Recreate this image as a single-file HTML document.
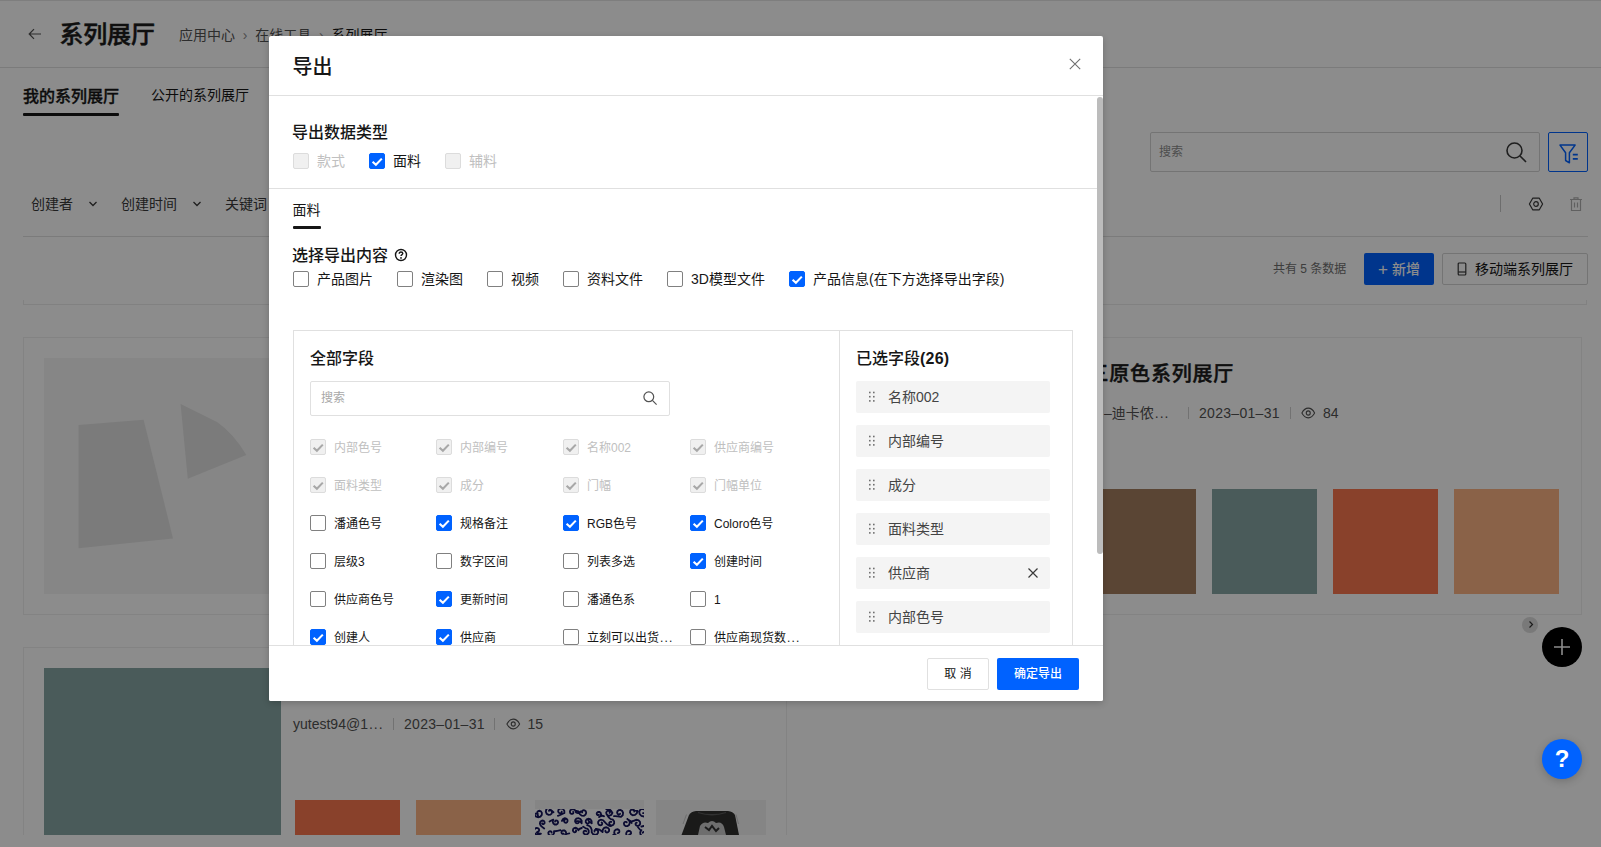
<!DOCTYPE html>
<html lang="zh-CN">
<head>
<meta charset="utf-8">
<title>系列展厅</title>
<style>
*{box-sizing:border-box;margin:0;padding:0}
html,body{width:1601px;height:847px;overflow:hidden;background:#fff}
body{font-family:"Liberation Sans","Noto Sans CJK SC",sans-serif;color:#161616;font-size:14px;position:relative}
.abs{position:absolute;white-space:nowrap}
.t{position:absolute;white-space:nowrap;line-height:20px;height:20px}
.hl{position:absolute;height:1px;background:#e0e0e0}
.vl{position:absolute;width:1px;background:#e0e0e0}
/* ---------- page ---------- */
#page{position:absolute;left:0;top:0;width:1601px;height:847px;background:#fff;overflow:hidden}
.card{position:absolute;border:1px solid #efefef;background:#fff}
.sw{position:absolute}
/* ---------- overlay / modal ---------- */
#mask{position:absolute;left:0;top:0;width:1601px;height:847px;background:rgba(0,0,0,.45)}
#modal{position:absolute;left:269px;top:36px;width:834px;height:665px;background:#fff;box-shadow:0 2px 7px rgba(0,0,0,.2);border-radius:2px;overflow:hidden}
.cb{position:absolute;width:16px;height:16px;border:1px solid #808080;border-radius:2px;background:#fff}
.cb.on{background:#0062ff;border-color:#0062ff}
.cb.dis{background:#f0f0f0;border-color:#dcdcdc}
.cb svg{position:absolute;left:-1px;top:-1px;width:16px;height:16px}
.l14{position:absolute;white-space:nowrap;font-size:14px;line-height:20px;color:#161616}
.l12{position:absolute;white-space:nowrap;font-size:12px;line-height:18px;color:#161616}
.gray{color:#c0c0c0}
.h16{position:absolute;white-space:nowrap;font-size:16px;line-height:22px;font-weight:500;color:#161616}
.item{position:absolute;left:587px;width:194px;height:32px;background:#f4f4f4;border-radius:2px}
.item span{position:absolute;left:32px;top:6px;font-size:14px;line-height:20px;color:#444;white-space:nowrap}
.item svg{position:absolute;left:11.500px;top:10px}
</style>
</head>
<body>
<div id="page">
  <!-- top header -->
  <div class="hl" style="left:0;top:0;width:1601px;background:#e6e6e6"></div>
  <div class="hl" style="left:0;top:67px;width:1601px"></div>
  <svg class="abs" style="left:27px;top:27px" width="16" height="14" viewBox="0 0 16 14"><path d="M14 7H2.500M7 2.200L2.200 7L7 11.800" fill="none" stroke="#525252" stroke-width="1.200"/></svg>
  <div class="abs" style="left:59.500px;top:16.500px;font-size:24px;line-height:36px;font-weight:500;-webkit-text-stroke:0.500px #1c1c1c;letter-spacing:-0.200px;color:#1c1c1c">系列展厅</div>
  <div class="abs" style="left:179px;top:25px;font-size:14px;line-height:20px;color:#525252">应用中心&nbsp; <span style="color:#8d8d8d">›</span>&nbsp; 在线工具&nbsp; <span style="color:#8d8d8d">›</span>&nbsp; <span style="color:#161616">系列展厅</span></div>
  <!-- tabs -->
  <div class="abs" style="left:23px;top:86px;font-size:16px;line-height:22px;font-weight:500;-webkit-text-stroke:0.350px #161616;color:#161616">我的系列展厅</div>
  <div class="abs" style="left:23px;top:113px;width:96px;height:3px;background:#161616;border-radius:1px"></div>
  <div class="abs" style="left:151px;top:85px;font-size:14px;line-height:20px;color:#161616">公开的系列展厅</div>
  <!-- search -->
  <div class="abs" style="left:1150px;top:132px;width:390px;height:40px;border:1px solid #d4d4d4;border-radius:2px"></div>
  <div class="abs" style="left:1159px;top:142px;font-size:12px;line-height:20px;color:#8d8d8d">搜索</div>
  <svg class="abs" style="left:1504px;top:140px" width="24" height="24" viewBox="0 0 24 24"><circle cx="10.5" cy="10.5" r="7.5" fill="none" stroke="#393939" stroke-width="1.6"/><path d="M16 16l6 6" stroke="#393939" stroke-width="1.6"/></svg>
  <div class="abs" style="left:1548px;top:132px;width:40px;height:40px;border:1.500px solid #0062ff;border-radius:2px;background:#fff"></div>
  <svg class="abs" style="left:1557px;top:142px" width="22" height="22" viewBox="0 0 22 22"><path d="M3 3.100H18.100L12.400 10.800V20.800L8.600 18.500V10.800z" fill="none" stroke="#0062ff" stroke-width="1.500" stroke-linejoin="round"/><path d="M15.800 12.700h5M15.800 16.900h5" stroke="#0062ff" stroke-width="1.700"/></svg>
  <!-- filter row -->
  <div class="abs" style="left:31px;top:194px;font-size:14px;line-height:20px;color:#393939">创建者</div>
  <svg class="abs" style="left:88px;top:200px" width="10" height="8" viewBox="0 0 10 8"><path d="M1.5 2L5 5.5L8.5 2" fill="none" stroke="#393939" stroke-width="1.3"/></svg>
  <div class="abs" style="left:121px;top:194px;font-size:14px;line-height:20px;color:#393939">创建时间</div>
  <svg class="abs" style="left:192px;top:200px" width="10" height="8" viewBox="0 0 10 8"><path d="M1.5 2L5 5.5L8.5 2" fill="none" stroke="#393939" stroke-width="1.3"/></svg>
  <div class="abs" style="left:225px;top:194px;font-size:14px;line-height:20px;color:#393939">关键词</div>
  <div class="vl" style="left:1500px;top:195px;height:17px;background:#c6c6c6"></div>
  <svg class="abs" style="left:1528px;top:196px" width="16" height="16" viewBox="0 0 16 16"><path d="M4.7 2.2h6.6L14.6 8l-3.3 5.8H4.700L1.400 8z" fill="none" stroke="#393939" stroke-width="1.2" stroke-linejoin="round"/><circle cx="8" cy="8" r="2.3" fill="none" stroke="#393939" stroke-width="1.2"/></svg>
  <svg class="abs" style="left:1569px;top:196px" width="14" height="16" viewBox="0 0 14 16"><path d="M1 3.500h12M5 3.500V1.800h4v1.700M2.500 3.500v11h9v-11M5.500 6.500v5M8.500 6.500v5" fill="none" stroke="#b0b0b0" stroke-width="1.2"/></svg>
  <div class="hl" style="left:23px;top:236px;width:1565px"></div>
  <!-- count row -->
  <div class="abs" style="left:1273px;top:259px;font-size:12px;line-height:20px;color:#6f6f6f">共有 5 条数据</div>
  <div class="abs" style="left:1364px;top:253px;width:70px;height:32px;background:#0062ff;border-radius:2px;color:#fff;font-size:14px;line-height:32px;text-align:center;font-weight:500"><span style="font-size:17px;font-weight:400;position:relative;top:0.500px">+</span> 新增</div>
  <div class="abs" style="left:1442px;top:253px;width:146px;height:32px;border:1px solid #d4d4d4;border-radius:2px"></div>
  <svg class="abs" style="left:1457px;top:262px" width="10" height="14" viewBox="0 0 10 14"><rect x="1.2" y="1" width="7.600" height="12" rx="1" fill="none" stroke="#393939" stroke-width="1.2"/><path d="M1.2 10h7.600" stroke="#393939" stroke-width="1.200"/></svg>
  <div class="abs" style="left:1475px;top:259px;font-size:14px;line-height:20px;color:#161616">移动端系列展厅</div>
  <div class="hl" style="left:23px;top:304px;width:1564px;background:#ececec"></div><div class="vl" style="left:23px;top:300px;height:4px;background:#ececec"></div><div class="vl" style="left:1586px;top:300px;height:4px;background:#ececec"></div>

  <!-- card 1 -->
  <div class="card" style="left:23px;top:337px;width:764px;height:278px"></div>
  <div class="sw" style="left:44px;top:358px;width:237px;height:236px;background:#f4f4f4"></div>
  <svg class="abs" style="left:44px;top:358px" width="237" height="236" viewBox="0 0 237 236"><path d="M34.600 67L99.600 61.700L129 180.400L34.600 190.200z" fill="#e0e0e0"/><path d="M136.600 45.900L173 64Q189 75 202.300 96.900L143.800 120.700z" fill="#e0e0e0"/></svg>

  <!-- card 2 (right) -->
  <div class="card" style="left:815px;top:337px;width:767px;height:278px"></div>
  <div class="abs" style="left:1088.500px;top:359px;font-size:20px;line-height:30px;font-weight:500;-webkit-text-stroke:0.450px #1c1c1c;letter-spacing:0.800px;color:#1c1c1c">三原色系列展厅</div>
  <div class="abs" style="left:1104px;top:403px;font-size:14px;line-height:20px;color:#525252">–迪卡侬<span style="letter-spacing:1px;margin-left:1px">...</span></div>
  <div class="vl" style="left:1188px;top:407px;height:12px;background:#d0d0d0"></div>
  <div class="abs" style="left:1199px;top:403px;font-size:14px;line-height:20px;color:#525252;letter-spacing:0.300px">2023–01–31</div>
  <div class="vl" style="left:1290px;top:407px;height:12px;background:#d0d0d0"></div>
  <svg class="abs" style="left:1301px;top:407px" width="14.500" height="12" viewBox="0 0 16 12" preserveAspectRatio="none"><path d="M1 6C3 2.500 5.500 1.200 8 1.200S13 2.500 15 6C13 9.500 10.500 10.800 8 10.800S3 9.500 1 6z" fill="none" stroke="#525252" stroke-width="1.200"/><circle cx="8" cy="6" r="2.200" fill="none" stroke="#525252" stroke-width="1.200"/></svg>
  <div class="abs" style="left:1323px;top:403px;font-size:14px;line-height:20px;color:#525252">84</div>
  <div class="sw" style="left:1090px;top:489px;width:106px;height:105px;background:#a57e60"></div>
  <div class="sw" style="left:1212px;top:489px;width:105px;height:105px;background:#88a7a5"></div>
  <div class="sw" style="left:1333px;top:489px;width:105px;height:105px;background:#f9774f"></div>
  <div class="sw" style="left:1454px;top:489px;width:105px;height:105px;background:#fbb283"></div>

  <!-- card 3 -->
  <div class="card" style="left:23px;top:647px;width:764px;height:278px"></div>
  <div class="sw" style="left:44px;top:668px;width:237px;height:167px;background:#88a7a5"></div>
  <div class="abs" style="left:293px;top:714px;font-size:14px;line-height:20px;color:#525252">yutest94@1<span style="letter-spacing:1px;margin-left:1px">...</span></div>
  <div class="vl" style="left:393px;top:718px;height:12px;background:#d0d0d0"></div>
  <div class="abs" style="left:404px;top:714px;font-size:14px;line-height:20px;color:#525252;letter-spacing:0.300px">2023–01–31</div>
  <div class="vl" style="left:494px;top:718px;height:12px;background:#d0d0d0"></div>
  <svg class="abs" style="left:506px;top:718px" width="14.500" height="12" viewBox="0 0 16 12" preserveAspectRatio="none"><path d="M1 6C3 2.500 5.500 1.200 8 1.200S13 2.500 15 6C13 9.500 10.500 10.800 8 10.800S3 9.500 1 6z" fill="none" stroke="#525252" stroke-width="1.200"/><circle cx="8" cy="6" r="2.200" fill="none" stroke="#525252" stroke-width="1.200"/></svg>
  <div class="abs" style="left:527.500px;top:714px;font-size:14px;line-height:20px;color:#525252">15</div>
  <div class="sw" style="left:295px;top:800px;width:105px;height:35px;background:#f9774f"></div>
  <div class="sw" style="left:416px;top:800px;width:105px;height:35px;background:#fbb283"></div>
  <svg class="abs" style="left:535px;top:800px" width="109" height="35" viewBox="0 0 109 35"><rect width="109" height="35" fill="#f2f2f2"/><rect y="9" width="109" height="26" fill="#fff"/><clipPath id="cp1"><rect y="9" width="109" height="26"/></clipPath><g clip-path="url(#cp1)"><path d="M-0.8 14.2 L0.8 16.4 L3.2 17.2 L5.4 16.6 L6.8 14.9 L6.9 12.9 L6.0 11.4 L4.5 10.8 L3.2 11.1 L2.3 12.0 L2.3 13.1 L2.7 13.8 M-0.8 14.2 Q2.3 12.4 3.0 15.5 M13.1 7.6 L11.3 9.4 L10.8 11.7 L11.7 13.8 L13.5 14.8 L15.4 14.7 L16.7 13.6 L17.1 12.1 L16.6 10.9 L15.6 10.2 L14.6 10.3 L14.0 10.8 M13.1 7.6 Q16.4 10.6 18.5 12.2 M29.4 13.0 L29.3 10.7 L28.0 9.0 L26.1 8.3 L24.3 8.9 L23.3 10.2 L23.2 11.7 L24.0 12.9 L25.1 13.4 L26.1 13.1 L26.7 12.4 L26.7 11.6 M29.4 13.0 Q25.4 15.0 22.9 15.8 M41.0 12.3 L40.2 10.3 L38.5 9.3 L36.7 9.3 L35.3 10.3 L34.9 11.8 L35.3 13.1 L36.3 13.9 L37.4 13.9 L38.2 13.4 L38.4 12.6 L38.2 11.9 M41.0 12.3 Q43.6 14.4 45.8 11.4 M43.9 11.9 L44.8 14.3 L46.7 15.7 L48.9 15.8 L50.5 14.6 L51.2 12.9 L50.8 11.3 L49.6 10.3 L48.3 10.2 L47.3 10.8 L47.0 11.7 L47.2 12.5 M43.9 11.9 Q43.7 10.7 40.7 10.9 M64.1 17.1 L65.6 16.0 L66.1 14.4 L65.6 12.9 L64.4 12.0 L63.1 11.9 L62.1 12.6 L61.7 13.6 L61.9 14.5 L62.6 15.1 L63.3 15.1 L63.8 14.8 M64.1 17.1 Q66.8 14.9 69.0 16.3 M77.4 12.9 L76.4 14.7 L74.6 15.6 L72.8 15.3 L71.5 14.1 L71.2 12.6 L71.8 11.3 L72.9 10.7 L74.0 10.8 L74.7 11.5 L74.9 12.3 L74.6 12.9 M77.4 12.9 Q75.2 8.1 71.3 9.2 M86.0 16.9 L87.7 15.2 L88.1 12.9 L87.2 11.0 L85.5 10.0 L83.7 10.2 L82.4 11.3 L82.1 12.7 L82.6 13.9 L83.5 14.5 L84.5 14.4 L85.1 13.8 M86.0 16.9 Q82.0 15.9 79.0 16.1 M102.5 10.8 L101.8 13.3 L100.0 14.9 L97.7 15.2 L95.9 14.1 L95.0 12.4 L95.3 10.7 L96.4 9.6 L97.8 9.4 L98.9 9.9 L99.3 10.8 L99.2 11.7 M102.5 10.8 Q98.6 11.4 95.5 7.9 M109.2 16.5 L106.5 16.0 L104.7 14.1 L104.2 11.8 L105.2 9.8 L106.9 8.8 L108.7 9.0 L109.9 10.1 L110.3 11.5 L109.8 12.6 L108.9 13.2 L108.0 13.1 M109.2 16.5 Q110.2 15.6 112.2 19.8 M5.6 25.3 L4.9 23.6 L5.2 21.9 L6.4 20.8 L7.8 20.5 L9.1 21.1 L9.6 22.2 L9.5 23.3 L8.8 24.0 L8.0 24.2 L7.4 23.9 L7.1 23.3 M5.6 25.3 Q5.9 26.3 9.2 28.6 M18.3 19.7 L17.7 21.6 L18.3 23.4 L19.7 24.5 L21.4 24.5 L22.6 23.7 L23.1 22.4 L22.8 21.3 L22.0 20.6 L21.0 20.5 L20.3 20.9 L20.1 21.6 M18.3 19.7 Q16.0 20.5 14.6 21.5 M26.9 20.9 L27.9 19.2 L29.5 18.3 L31.1 18.6 L32.3 19.6 L32.6 21.0 L32.1 22.2 L31.1 22.8 L30.1 22.7 L29.4 22.1 L29.2 21.4 L29.5 20.8 M26.9 20.9 Q30.2 20.2 30.9 18.5 M46.6 23.3 L46.7 20.8 L45.4 18.9 L43.4 18.1 L41.4 18.6 L40.2 20.0 L40.1 21.6 L40.8 22.9 L42.0 23.4 L43.1 23.2 L43.8 22.5 L43.8 21.7 M46.6 23.3 Q45.8 20.5 41.7 21.2 M56.7 23.3 L56.6 21.0 L55.4 19.3 L53.5 18.7 L51.8 19.2 L50.8 20.5 L50.7 22.0 L51.4 23.1 L52.5 23.6 L53.5 23.3 L54.1 22.6 L54.1 21.9 M56.7 23.3 Q53.2 20.9 52.6 19.2 M69.6 21.9 L68.1 20.2 L65.9 19.7 L64.1 20.5 L63.1 22.0 L63.2 23.7 L64.1 24.9 L65.4 25.3 L66.6 24.9 L67.2 24.0 L67.2 23.1 L66.7 22.5 M69.6 21.9 Q73.8 26.7 76.3 26.0 M75.6 19.0 L77.8 19.6 L79.1 21.3 L79.2 23.2 L78.3 24.8 L76.8 25.5 L75.3 25.2 L74.4 24.2 L74.2 23.0 L74.7 22.1 L75.6 21.7 L76.3 21.9 M75.6 19.0 Q74.0 18.3 72.0 14.7 M92.3 19.0 L94.2 20.6 L94.8 22.8 L94.1 24.9 L92.5 26.0 L90.7 26.1 L89.4 25.1 L88.9 23.8 L89.2 22.5 L90.1 21.8 L91.1 21.8 L91.7 22.3 M92.3 19.0 Q95.9 20.5 96.7 23.0 M99.2 20.7 L101.4 19.8 L103.6 20.3 L105.0 21.8 L105.2 23.7 L104.4 25.2 L103.0 25.9 L101.6 25.7 L100.7 24.8 L100.5 23.8 L101.0 22.9 L101.7 22.6 M99.2 20.7 Q95.3 22.1 94.7 21.8 M111.1 26.5 L110.4 24.1 L111.1 21.8 L112.9 20.5 L114.9 20.5 L116.4 21.5 L117.0 23.0 L116.7 24.5 L115.6 25.3 L114.5 25.4 L113.7 24.9 L113.4 24.1 M111.1 26.5 Q108.8 25.4 106.4 26.6 M5.9 33.6 L3.5 34.8 L1.0 34.4 L-0.7 32.8 L-1.1 30.7 L-0.3 28.9 L1.2 28.0 L2.8 28.1 L3.9 29.0 L4.2 30.2 L3.8 31.2 L3.0 31.6 M5.9 33.6 Q2.5 33.7 1.9 32.3 M19.0 31.2 L19.0 33.3 L17.9 35.0 L16.2 35.7 L14.5 35.3 L13.5 34.1 L13.3 32.7 L13.9 31.6 L15.0 31.1 L15.9 31.3 L16.5 31.9 L16.6 32.6 M19.0 31.2 Q21.2 31.5 25.5 30.2 M29.0 36.2 L30.6 35.0 L31.2 33.2 L30.7 31.5 L29.5 30.5 L28.0 30.4 L26.9 31.1 L26.4 32.2 L26.7 33.3 L27.4 33.9 L28.1 33.9 L28.7 33.6 M29.0 36.2 Q30.2 33.8 34.3 33.3 M43.4 30.2 L42.4 28.6 L40.8 27.8 L39.2 28.1 L38.1 29.2 L37.9 30.6 L38.4 31.7 L39.4 32.3 L40.4 32.1 L41.0 31.5 L41.2 30.8 L40.9 30.2 M43.4 30.2 Q43.9 28.6 46.8 28.0 M52.5 28.8 L53.7 30.6 L53.7 32.6 L52.6 34.1 L51.0 34.7 L49.5 34.2 L48.6 33.2 L48.5 31.9 L49.1 30.9 L50.0 30.6 L50.8 30.8 L51.3 31.3 M52.5 28.8 Q50.8 28.8 48.2 26.6 M56.7 29.9 L56.7 32.3 L58.1 34.2 L60.0 34.9 L61.9 34.4 L63.0 33.0 L63.2 31.4 L62.4 30.2 L61.2 29.7 L60.1 29.9 L59.5 30.7 L59.5 31.5 M56.7 29.9 Q55.7 26.0 52.1 25.2 M67.6 32.0 L67.8 29.6 L69.2 27.9 L71.2 27.3 L73.0 27.9 L74.1 29.3 L74.1 30.9 L73.2 32.1 L72.0 32.5 L71.0 32.2 L70.4 31.5 L70.4 30.7 M67.6 32.0 Q64.1 28.6 60.8 29.0 M84.4 35.8 L81.9 35.9 L80.0 34.7 L79.2 32.7 L79.6 30.7 L80.9 29.5 L82.6 29.3 L83.9 30.0 L84.4 31.2 L84.2 32.3 L83.5 33.0 L82.7 33.1 M84.4 35.8 Q82.5 37.7 78.3 34.8 M97.3 36.5 L95.0 37.3 L92.7 36.7 L91.3 35.0 L91.2 33.1 L92.1 31.5 L93.6 30.8 L95.0 31.1 L95.9 32.0 L96.1 33.2 L95.6 34.0 L94.8 34.3 M97.3 36.5 Q95.7 38.1 93.5 35.2 M106.4 30.1 L105.2 32.1 L105.4 34.2 L106.6 35.7 L108.3 36.2 L109.9 35.7 L110.8 34.4 L110.8 33.1 L110.1 32.1 L109.1 31.8 L108.3 32.1 L107.8 32.7 M106.4 30.1 Q106.3 31.6 103.0 27.3" fill="none" stroke="#14145a" stroke-width="1.800" stroke-linecap="round"/></g></svg>
  <svg class="abs" style="left:656px;top:800px" width="110" height="35" viewBox="0 0 110 35"><rect width="110" height="35" fill="#f2f2f2"/><path d="M25.500 35L33 15Q35 11.500 40 11L72 11Q77 11.500 79 15L83 35z" fill="#30302e"/><path d="M42 12.500Q56 17 70 12.500" fill="none" stroke="#5a5a5a" stroke-width="1.300"/><path d="M42 35L44 26Q47 21 52 23Q56 19 60 23Q66 21 68 27L70 35z" fill="#c8c8c8"/><path d="M49 27l4 3l3-4l4 5l3-3" fill="none" stroke="#333" stroke-width="2"/><path d="M27 24L30.500 14.500M82.500 24L80 14.500" stroke="#c4c4c4" stroke-width="0.900"/></svg>
  <!-- bottom bar -->
  <div class="abs" style="left:0;top:835px;width:1601px;height:12px;background:#fff"></div>

  <!-- floating buttons -->
  <div class="abs" style="left:1522px;top:616.500px;width:16px;height:16px;border-radius:50%;background:#dcdcdc"></div>
  <svg class="abs" style="left:1526.500px;top:620px" width="8" height="9" viewBox="0 0 8 9"><path d="M2.500 1.500L5.500 4.500L2.500 7.500" fill="none" stroke="#333" stroke-width="1.200"/></svg>
  <div class="abs" style="left:1542px;top:627px;width:40px;height:40px;border-radius:50%;background:#000"></div>
  <svg class="abs" style="left:1553px;top:638px" width="18" height="18" viewBox="0 0 18 18"><path d="M9 1v16M1 9h16" stroke="#fff" stroke-width="1.600"/></svg>
</div>

<div id="mask"></div>
<div class="abs" style="left:1542px;top:739px;width:40px;height:40px;border-radius:50%;background:#0062ff;color:#fff;font-size:24px;line-height:40px;font-weight:700;text-align:center;box-shadow:0 2px 8px rgba(0,0,0,.2)">?</div>

<div id="modal">
  <div class="abs" style="left:23.5px;top:16px;font-size:20px;line-height:30px;font-weight:500;color:#161616">导出</div>
  <svg class="abs" style="left:800px;top:22px" width="12" height="12" viewBox="0 0 12 12"><path d="M0.800 0.800L11.200 11.200M11.200 0.800L0.800 11.200" stroke="#6f6f6f" stroke-width="1.100"/></svg>
  <div class="hl" style="left:0;top:59px;width:834px"></div>
  <div class="abs" style="left:828px;top:60px;width:6px;height:549px;background:#fff"></div>
  <div class="abs" style="left:828px;top:61px;width:6px;height:457px;background:#bcbcbc;border-radius:3px"></div>
  <div class="h16" style="left:23px;top:86px">导出数据类型</div>
  <div class="cb dis" style="left:24px;top:117px"></div>
  <div class="l14 gray" style="left:48px;top:115px">款式</div>
  <div class="cb on" style="left:100px;top:117px"><svg viewBox="0 0 16 16"><path d="M3.600 8.700L6.900 11.800L12.800 5.600" fill="none" stroke="#fff" stroke-width="2.100"/></svg></div>
  <div class="l14" style="left:124px;top:115px">面料</div>
  <div class="cb dis" style="left:176px;top:117px"></div>
  <div class="l14 gray" style="left:200px;top:115px">辅料</div>
  <div class="hl" style="left:0;top:152px;width:828px"></div>
  <div class="l14" style="left:23.5px;top:164px">面料</div>
  <div class="abs" style="left:24px;top:190px;width:28px;height:3px;background:#161616;border-radius:1px"></div>
  <div class="h16" style="left:23px;top:209px">选择导出内容</div>
  <svg class="abs" style="left:125px;top:212px" width="14" height="14" viewBox="0 0 14 14"><circle cx="7" cy="7" r="5.500" fill="none" stroke="#161616" stroke-width="1.400"/><path d="M5.200 5.800C5.200 4.600 6 4 7 4S8.800 4.600 8.800 5.600C8.800 6.700 7 6.700 7 8.100" fill="none" stroke="#161616" stroke-width="1.400"/><circle cx="7" cy="9.900" r="0.900" fill="#161616"/></svg>
  <div class="cb" style="left:24px;top:235px"></div>
  <div class="l14" style="left:48px;top:233px">产品图片</div>
  <div class="cb" style="left:128px;top:235px"></div>
  <div class="l14" style="left:152px;top:233px">渲染图</div>
  <div class="cb" style="left:218px;top:235px"></div>
  <div class="l14" style="left:242px;top:233px">视频</div>
  <div class="cb" style="left:294px;top:235px"></div>
  <div class="l14" style="left:318px;top:233px">资料文件</div>
  <div class="cb" style="left:398px;top:235px"></div>
  <div class="l14" style="left:422px;top:233px">3D模型文件</div>
  <div class="cb on" style="left:520px;top:235px"><svg viewBox="0 0 16 16"><path d="M3.600 8.700L6.900 11.800L12.800 5.600" fill="none" stroke="#fff" stroke-width="2.100"/></svg></div>
  <div class="l14" style="left:544px;top:233px">产品信息(在下方选择导出字段)</div>
  <div class="abs" style="left:24px;top:294px;width:780px;height:400px;border:1px solid #e0e0e0"></div>
  <div class="vl" style="left:570px;top:294px;height:400px"></div>
  <div class="h16" style="left:41px;top:312px">全部字段</div>
  <div class="abs" style="left:41px;top:345px;width:360px;height:35px;border:1px solid #e0e0e0;border-radius:2px"></div>
  <div class="abs" style="left:52px;top:352px;font-size:12px;line-height:20px;color:#a8a8a8">搜索</div>
  <svg class="abs" style="left:373px;top:354px" width="16" height="16" viewBox="0 0 16 16"><circle cx="6.800" cy="6.800" r="4.900" fill="none" stroke="#525252" stroke-width="1.200"/><path d="M10.400 10.400L14.600 14.600" stroke="#525252" stroke-width="1.200"/></svg>
  <div class="cb dis" style="left:41px;top:403px"><svg viewBox="0 0 16 16"><path d="M3.600 8.700L6.900 11.800L12.800 5.600" fill="none" stroke="#a8a8a8" stroke-width="2.100"/></svg></div>
  <div class="l12 gray" style="left:65px;top:403px">内部色号</div>
  <div class="cb dis" style="left:167px;top:403px"><svg viewBox="0 0 16 16"><path d="M3.600 8.700L6.900 11.800L12.800 5.600" fill="none" stroke="#a8a8a8" stroke-width="2.100"/></svg></div>
  <div class="l12 gray" style="left:191px;top:403px">内部编号</div>
  <div class="cb dis" style="left:294px;top:403px"><svg viewBox="0 0 16 16"><path d="M3.600 8.700L6.900 11.800L12.800 5.600" fill="none" stroke="#a8a8a8" stroke-width="2.100"/></svg></div>
  <div class="l12 gray" style="left:318px;top:403px">名称002</div>
  <div class="cb dis" style="left:421px;top:403px"><svg viewBox="0 0 16 16"><path d="M3.600 8.700L6.900 11.800L12.800 5.600" fill="none" stroke="#a8a8a8" stroke-width="2.100"/></svg></div>
  <div class="l12 gray" style="left:445px;top:403px">供应商编号</div>
  <div class="cb dis" style="left:41px;top:441px"><svg viewBox="0 0 16 16"><path d="M3.600 8.700L6.900 11.800L12.800 5.600" fill="none" stroke="#a8a8a8" stroke-width="2.100"/></svg></div>
  <div class="l12 gray" style="left:65px;top:441px">面料类型</div>
  <div class="cb dis" style="left:167px;top:441px"><svg viewBox="0 0 16 16"><path d="M3.600 8.700L6.900 11.800L12.800 5.600" fill="none" stroke="#a8a8a8" stroke-width="2.100"/></svg></div>
  <div class="l12 gray" style="left:191px;top:441px">成分</div>
  <div class="cb dis" style="left:294px;top:441px"><svg viewBox="0 0 16 16"><path d="M3.600 8.700L6.900 11.800L12.800 5.600" fill="none" stroke="#a8a8a8" stroke-width="2.100"/></svg></div>
  <div class="l12 gray" style="left:318px;top:441px">门幅</div>
  <div class="cb dis" style="left:421px;top:441px"><svg viewBox="0 0 16 16"><path d="M3.600 8.700L6.900 11.800L12.800 5.600" fill="none" stroke="#a8a8a8" stroke-width="2.100"/></svg></div>
  <div class="l12 gray" style="left:445px;top:441px">门幅单位</div>
  <div class="cb" style="left:41px;top:479px"></div>
  <div class="l12" style="left:65px;top:479px">潘通色号</div>
  <div class="cb on" style="left:167px;top:479px"><svg viewBox="0 0 16 16"><path d="M3.600 8.700L6.900 11.800L12.800 5.600" fill="none" stroke="#fff" stroke-width="2.100"/></svg></div>
  <div class="l12" style="left:191px;top:479px">规格备注</div>
  <div class="cb on" style="left:294px;top:479px"><svg viewBox="0 0 16 16"><path d="M3.600 8.700L6.900 11.800L12.800 5.600" fill="none" stroke="#fff" stroke-width="2.100"/></svg></div>
  <div class="l12" style="left:318px;top:479px">RGB色号</div>
  <div class="cb on" style="left:421px;top:479px"><svg viewBox="0 0 16 16"><path d="M3.600 8.700L6.900 11.800L12.800 5.600" fill="none" stroke="#fff" stroke-width="2.100"/></svg></div>
  <div class="l12" style="left:445px;top:479px">Coloro色号</div>
  <div class="cb" style="left:41px;top:517px"></div>
  <div class="l12" style="left:65px;top:517px">层级3</div>
  <div class="cb" style="left:167px;top:517px"></div>
  <div class="l12" style="left:191px;top:517px">数字区间</div>
  <div class="cb" style="left:294px;top:517px"></div>
  <div class="l12" style="left:318px;top:517px">列表多选</div>
  <div class="cb on" style="left:421px;top:517px"><svg viewBox="0 0 16 16"><path d="M3.600 8.700L6.900 11.800L12.800 5.600" fill="none" stroke="#fff" stroke-width="2.100"/></svg></div>
  <div class="l12" style="left:445px;top:517px">创建时间</div>
  <div class="cb" style="left:41px;top:555px"></div>
  <div class="l12" style="left:65px;top:555px">供应商色号</div>
  <div class="cb on" style="left:167px;top:555px"><svg viewBox="0 0 16 16"><path d="M3.600 8.700L6.900 11.800L12.800 5.600" fill="none" stroke="#fff" stroke-width="2.100"/></svg></div>
  <div class="l12" style="left:191px;top:555px">更新时间</div>
  <div class="cb" style="left:294px;top:555px"></div>
  <div class="l12" style="left:318px;top:555px">潘通色系</div>
  <div class="cb" style="left:421px;top:555px"></div>
  <div class="l12" style="left:445px;top:555px">1</div>
  <div class="cb on" style="left:41px;top:593px"><svg viewBox="0 0 16 16"><path d="M3.600 8.700L6.900 11.800L12.800 5.600" fill="none" stroke="#fff" stroke-width="2.100"/></svg></div>
  <div class="l12" style="left:65px;top:593px">创建人</div>
  <div class="cb on" style="left:167px;top:593px"><svg viewBox="0 0 16 16"><path d="M3.600 8.700L6.900 11.800L12.800 5.600" fill="none" stroke="#fff" stroke-width="2.100"/></svg></div>
  <div class="l12" style="left:191px;top:593px">供应商</div>
  <div class="cb" style="left:294px;top:593px"></div>
  <div class="l12" style="left:318px;top:593px">立刻可以出货<span style="letter-spacing:1.200px;margin-left:1px">...</span></div>
  <div class="cb" style="left:421px;top:593px"></div>
  <div class="l12" style="left:445px;top:593px">供应商现货数<span style="letter-spacing:1.200px;margin-left:1px">...</span></div>
  <div class="h16" style="left:587px;top:312px">已选字段<span style="font-weight:700;letter-spacing:0.200px">(26)</span></div>
  <div class="item" style="top:345px"><svg width="8" height="12" viewBox="0 0 8 12"><g fill="#6f6f6f"><rect x="1" y="0.700" width="1.600" height="1.600"/><rect x="5" y="0.700" width="1.600" height="1.600"/><rect x="1" y="4.900" width="1.600" height="1.600"/><rect x="5" y="4.900" width="1.600" height="1.600"/><rect x="1" y="9.100" width="1.600" height="1.600"/><rect x="5" y="9.100" width="1.600" height="1.600"/></g></svg><span>名称002</span></div>
  <div class="item" style="top:389px"><svg width="8" height="12" viewBox="0 0 8 12"><g fill="#6f6f6f"><rect x="1" y="0.700" width="1.600" height="1.600"/><rect x="5" y="0.700" width="1.600" height="1.600"/><rect x="1" y="4.900" width="1.600" height="1.600"/><rect x="5" y="4.900" width="1.600" height="1.600"/><rect x="1" y="9.100" width="1.600" height="1.600"/><rect x="5" y="9.100" width="1.600" height="1.600"/></g></svg><span>内部编号</span></div>
  <div class="item" style="top:433px"><svg width="8" height="12" viewBox="0 0 8 12"><g fill="#6f6f6f"><rect x="1" y="0.700" width="1.600" height="1.600"/><rect x="5" y="0.700" width="1.600" height="1.600"/><rect x="1" y="4.900" width="1.600" height="1.600"/><rect x="5" y="4.900" width="1.600" height="1.600"/><rect x="1" y="9.100" width="1.600" height="1.600"/><rect x="5" y="9.100" width="1.600" height="1.600"/></g></svg><span>成分</span></div>
  <div class="item" style="top:477px"><svg width="8" height="12" viewBox="0 0 8 12"><g fill="#6f6f6f"><rect x="1" y="0.700" width="1.600" height="1.600"/><rect x="5" y="0.700" width="1.600" height="1.600"/><rect x="1" y="4.900" width="1.600" height="1.600"/><rect x="5" y="4.900" width="1.600" height="1.600"/><rect x="1" y="9.100" width="1.600" height="1.600"/><rect x="5" y="9.100" width="1.600" height="1.600"/></g></svg><span>面料类型</span></div>
  <div class="item" style="top:521px"><svg width="8" height="12" viewBox="0 0 8 12"><g fill="#6f6f6f"><rect x="1" y="0.700" width="1.600" height="1.600"/><rect x="5" y="0.700" width="1.600" height="1.600"/><rect x="1" y="4.900" width="1.600" height="1.600"/><rect x="5" y="4.900" width="1.600" height="1.600"/><rect x="1" y="9.100" width="1.600" height="1.600"/><rect x="5" y="9.100" width="1.600" height="1.600"/></g></svg><span>供应商</span><svg style="left:172px;top:11px" width="10" height="10" viewBox="0 0 10 10"><path d="M0.500 0.500L9.500 9.500M9.500 0.500L0.500 9.500" stroke="#393939" stroke-width="1.200"/></svg></div>
  <div class="item" style="top:565px"><svg width="8" height="12" viewBox="0 0 8 12"><g fill="#6f6f6f"><rect x="1" y="0.700" width="1.600" height="1.600"/><rect x="5" y="0.700" width="1.600" height="1.600"/><rect x="1" y="4.900" width="1.600" height="1.600"/><rect x="5" y="4.900" width="1.600" height="1.600"/><rect x="1" y="9.100" width="1.600" height="1.600"/><rect x="5" y="9.100" width="1.600" height="1.600"/></g></svg><span>内部色号</span></div>
  <div class="abs" style="left:0;top:609px;width:834px;height:56px;background:#fff;border-top:1px solid #e0e0e0"></div>
  <div class="abs" style="left:658px;top:622px;width:62px;height:32px;border:1px solid #e0e0e0;border-radius:2px;font-size:12px;line-height:30px;text-align:center;color:#161616">取 消</div>
  <div class="abs" style="left:728px;top:622px;width:82px;height:32px;background:#0062ff;border-radius:2px;font-size:12px;line-height:32px;text-align:center;color:#fff;font-weight:500">确定导出</div>
</div>
</body>
</html>
